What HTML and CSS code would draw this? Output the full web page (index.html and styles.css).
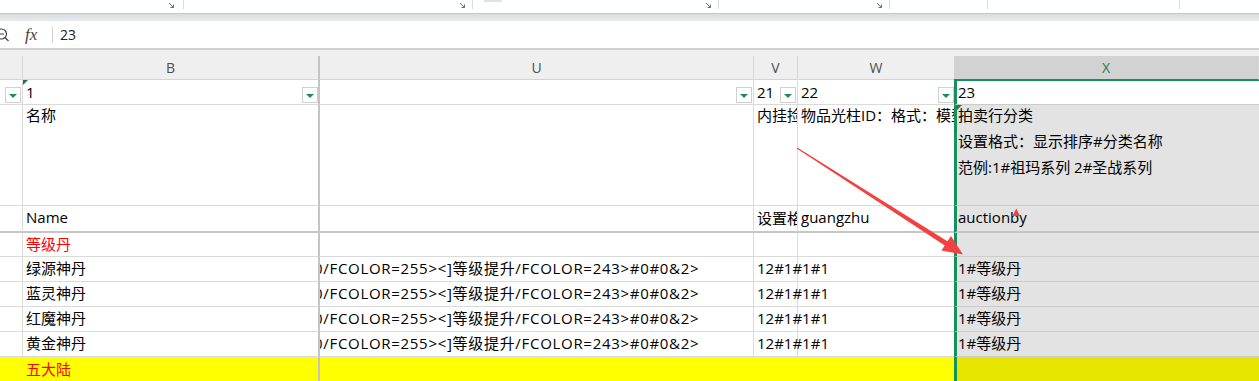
FILE: index.html
```html
<!DOCTYPE html>
<html lang="zh-CN">
<head>
    <meta charset="UTF-8">
    <title>Sheet</title>
    <link rel="stylesheet" href="styles.css">
</head>
<body>
    <div class="ribbon">
        <div class="group g1"><svg class="launcher" viewBox="0 0 7 7"><path d="M1 1 L5.5 5.5 M5.5 2.5 V5.5 H2.5"/></svg></div>
        <div class="group g2"><svg class="launcher" viewBox="0 0 7 7"><path d="M1 1 L5.5 5.5 M5.5 2.5 V5.5 H2.5"/></svg></div>
        <div class="group g3"><span class="tab-stub"></span><svg class="launcher" viewBox="0 0 7 7"><path d="M1 1 L5.5 5.5 M5.5 2.5 V5.5 H2.5"/></svg></div>
        <div class="group g4"><svg class="launcher" viewBox="0 0 7 7"><path d="M1 1 L5.5 5.5 M5.5 2.5 V5.5 H2.5"/></svg></div>
        <div class="group g5"></div>
        <div class="group g6"></div>
        <div class="group g7"></div>
    </div>
    <div class="ribbon-bar"></div>

    <div class="formula-bar">
        <svg class="zoom-icon" viewBox="0 0 10 16"><circle cx="1.5" cy="7" r="5"/><path d="M-1.5 7 H4 M5 10.5 L8.5 14"/></svg>
        <span class="fx">fx</span>
        <span class="sep"></span>
        <span class="formula-value">23</span>
    </div>

    <div class="col-heads">
        <div class="head"></div>
        <div class="head c-b">B</div>
        <div class="head">U</div>
        <div class="head">V</div>
        <div class="head c-w">W</div>
        <div class="head c-x">X</div>
    </div>

    <div class="row r-filter">
        <div class="cell"><span class="filter"></span></div>
        <div class="cell c-b flag">1<span class="filter"></span></div>
        <div class="cell"><span class="filter"></span></div>
        <div class="cell">21<span class="filter"></span></div>
        <div class="cell c-w">22<span class="filter"></span></div>
        <div class="cell c-x">23</div>
    </div>

    <div class="row r-tall">
        <div class="cell"></div>
        <div class="cell c-b"><div class="lines">名称</div></div>
        <div class="cell"></div>
        <div class="cell"><div class="lines">内挂捡取设置</div></div>
        <div class="cell c-w"><div class="lines">物品光柱ID：格式：模型ID</div></div>
        <div class="cell c-x flag">
            <div class="lines">
                <div>拍卖行分类</div>
                <div>设置格式：显示排序#分类名称</div>
                <div>范例:1#祖玛系列 2#圣战系列</div>
            </div>
        </div>
    </div>

    <div class="row r-keys">
        <div class="cell"></div>
        <div class="cell c-b">Name</div>
        <div class="cell"></div>
        <div class="cell">设置格式</div>
        <div class="cell c-w">guangzhu</div>
        <div class="cell c-x">auctionby</div>
    </div>

    <div class="row r-first">
        <div class="cell"></div>
        <div class="cell c-b red">等级丹</div>
        <div class="cell"></div>
        <div class="cell"></div>
        <div class="cell c-w"></div>
        <div class="cell c-x"></div>
    </div>

    <div class="row">
        <div class="cell"></div>
        <div class="cell c-b">绿源神丹</div>
        <div class="cell c-u"><span class="spill">0/FCOLOR=255&gt;&lt;]等级提升/FCOLOR=243&gt;#0#0&amp;2&gt;</span></div>
        <div class="cell overflow">12#1#1#1</div>
        <div class="cell c-w"></div>
        <div class="cell c-x">1#等级丹</div>
    </div>

    <div class="row">
        <div class="cell"></div>
        <div class="cell c-b">蓝灵神丹</div>
        <div class="cell c-u"><span class="spill">0/FCOLOR=255&gt;&lt;]等级提升/FCOLOR=243&gt;#0#0&amp;2&gt;</span></div>
        <div class="cell overflow">12#1#1#1</div>
        <div class="cell c-w"></div>
        <div class="cell c-x">1#等级丹</div>
    </div>

    <div class="row">
        <div class="cell"></div>
        <div class="cell c-b">红魔神丹</div>
        <div class="cell c-u"><span class="spill">0/FCOLOR=255&gt;&lt;]等级提升/FCOLOR=243&gt;#0#0&amp;2&gt;</span></div>
        <div class="cell overflow">12#1#1#1</div>
        <div class="cell c-w"></div>
        <div class="cell c-x">1#等级丹</div>
    </div>

    <div class="row">
        <div class="cell"></div>
        <div class="cell c-b">黄金神丹</div>
        <div class="cell c-u"><span class="spill">0/FCOLOR=255&gt;&lt;]等级提升/FCOLOR=243&gt;#0#0&amp;2&gt;</span></div>
        <div class="cell overflow">12#1#1#1</div>
        <div class="cell c-w"></div>
        <div class="cell c-x">1#等级丹</div>
    </div>

    <div class="row r-yellow">
        <div class="cell"></div>
        <div class="cell c-b red">五大陆</div>
        <div class="cell"></div>
        <div class="cell"></div>
        <div class="cell c-w"></div>
        <div class="cell c-x"></div>
    </div>

    <!-- red annotation drawn over the sheet -->
    <svg class="annotation" viewBox="0 0 1259 381">
        <polygon points="797.3,147.6 947.4,241.2 951,236 963,254.5 941.5,250.6 944.8,245.4 796.7,148.4"/>
        <polygon points="1012.5,216 1016.3,208.5 1020,216"/>
    </svg>
</body>
</html>
```

FILE: styles.css
```css
:root {
    --cols: 23px 297px 434px 44px 156px 1fr;
    --grid: #dadada;
    --green: #15915e;
}
body {
    margin: 0;
    width: 1259px;
    height: 381px;
    overflow: hidden;
    position: relative;
    font-family: "Open Sans", "Noto Sans CJK SC", sans-serif;
    font-size: 15px;
    color: #000;
    background: #fff;
}

/* ribbon remains at the top */
.ribbon {
    height: 13px;
    display: flex;
}
.group {
    height: 9px;
    border-right: 1px solid #dadada;
    display: flex;
    justify-content: flex-end;
    align-items: flex-end;
    position: relative;
}
.g1 { width: 183px; }
.g2 { width: 288px; }
.g3 { width: 245px; }
.g4 { width: 170px; }
.g5 { width: 97px; }
.g6 { width: 191px; }
.g7 { flex: 1; border-right: none; }
.g1 .launcher { margin-right: 8px; }
.launcher {
    width: 7px;
    height: 7px;
    margin-right: 6px;
    fill: none;
    stroke: #6e6e6e;
    stroke-width: 1;
}
.tab-stub {
    position: absolute;
    left: 11px;
    top: 0;
    width: 18px;
    height: 2px;
    background: #e2e2e2;
}
.ribbon-bar {
    height: 7px;
    border-top: 1px solid #c3c8cd;
    background: linear-gradient(#d6dbdf, #e9ecef);
}

.formula-bar {
    height: 27px;
    border-bottom: 2px solid #d0d0d0;
    display: flex;
    align-items: center;
}
.zoom-icon {
    width: 10px;
    height: 16px;
    fill: none;
    stroke: #444;
    stroke-width: 1.2;
    overflow: visible;
}
.fx {
    width: 42px;
    padding-left: 15px;
    box-sizing: border-box;
    font-family: "Liberation Serif", serif;
    font-style: italic;
    font-size: 17px;
    color: #444;
}
.sep {
    width: 1px;
    height: 16px;
    background: #d2d2d2;
}
.formula-value {
    padding-left: 7px;
    font-size: 14px;
    color: #222;
}

/* column letters */
.col-heads {
    display: grid;
    grid-template-columns: var(--cols);
    padding-top: 6px;
    background: #efefef;
}
.head {
    height: 23px;
    border-right: 1px solid #d6d6d6;
    border-bottom: 1px solid #d4d4d4;
    display: flex;
    align-items: center;
    justify-content: center;
    font-size: 14px;
    color: #4a4f55;
}
.head.c-b { border-right: 2px solid #c4c4c4; }
.head.c-w { border-right: none; }
.head.c-x {
    background: #d2d2d2;
    color: #1d7a4a;
    border-bottom-color: var(--green);
}

/* cells */
.row {
    display: grid;
    grid-template-columns: var(--cols);
    height: 25px;
}
.cell {
    position: relative;
    overflow: hidden;
    white-space: nowrap;
    border-right: 1px solid var(--grid);
    border-bottom: 1px solid var(--grid);
    padding-left: 3px;
    padding-bottom: 3px;
    display: flex;
    align-items: center;
}
.cell.overflow { overflow: visible; }
.cell.c-b { border-right: 2px solid #c4c4c4; }
.cell.c-w { border-right: none; }
.cell.c-u { padding-left: 0; }
.cell.c-x {
    border-right: none;
    border-left: 3px solid var(--green);
    border-bottom-color: #cbcbcb;
    background: #e3e3e3;
    padding-left: 1px;
}
.spill {
    margin-left: -6px;
    letter-spacing: 0.7px;
}
.red { color: #ff0000; }

.r-filter .cell { padding-bottom: 1px; }
.r-filter .cell.c-x {
    background: #fff;
    box-shadow: inset 0 1px var(--green);
}
.r-tall { height: 101px; }
.r-tall .cell { align-items: flex-start; }
.lines {
    line-height: 26px;
    margin-top: -3px;
}
.r-keys { height: 27px; }
.r-keys .cell { border-bottom: 2px solid #c6c6c6; }
.r-first { height: 24px; }
.r-yellow { height: 26px; }
.r-yellow .cell {
    background: #ffff00;
    border-right-color: transparent;
    border-bottom: none;
}
.r-yellow .cell.c-b { border-right-color: #c4c4c4; }
.r-yellow .cell.c-x { background: #e6e600; }

.flag::before {
    content: "";
    position: absolute;
    left: 0;
    top: 0;
    border-top: 5px solid #1f7a3d;
    border-right: 5px solid transparent;
}

.filter {
    position: absolute;
    right: 1px;
    bottom: 1px;
    width: 16px;
    height: 16px;
    box-sizing: border-box;
    border: 1px solid #d0d0d0;
    background: #fff;
    display: flex;
    align-items: center;
    justify-content: center;
}
.filter::after {
    content: "";
    margin-top: 1px;
    border-left: 4px solid transparent;
    border-right: 4px solid transparent;
    border-top: 4px solid #1e8c57;
}
.cell.c-b .filter,
.cell.c-w .filter { right: 0; }

.annotation {
    position: absolute;
    left: 0;
    top: 0;
    width: 1259px;
    height: 381px;
    pointer-events: none;
    fill: #f24141;
}
```
